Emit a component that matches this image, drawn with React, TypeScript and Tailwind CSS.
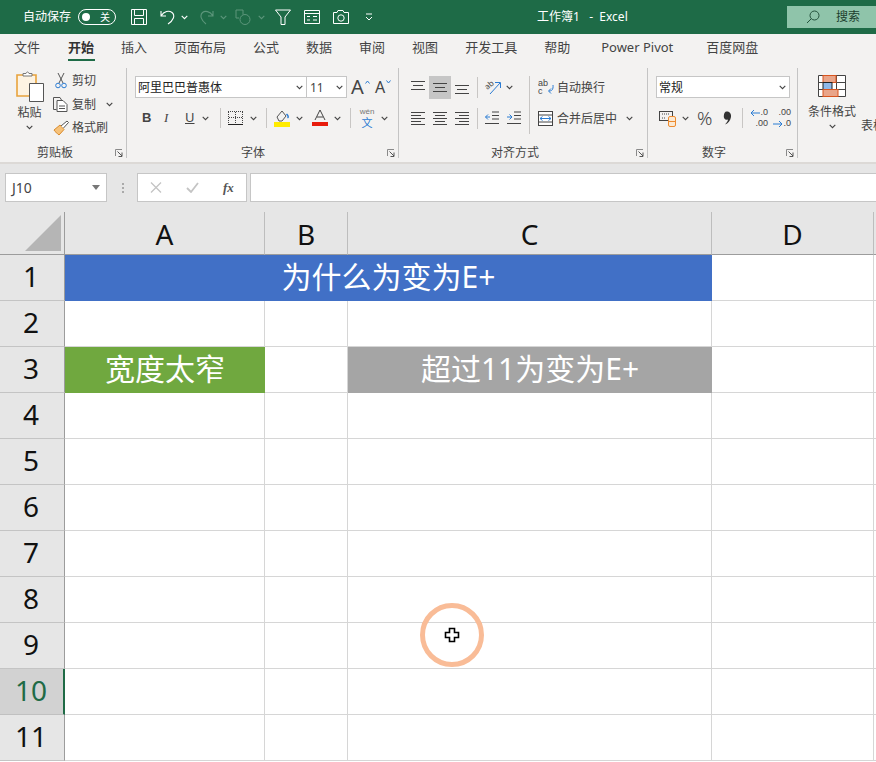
import React from "react";

const Chev = ({ c = "#444", className = "" }: { c?: string; className?: string }) => (
  <svg width="7" height="5" viewBox="0 0 7 5" className={"shrink-0 " + className}>
    <path d="M0.7 0.8 L3.5 3.6 L6.3 0.8" fill="none" stroke={c} strokeWidth="1.1" />
  </svg>
);

const Launcher = () => (
  <svg width="8" height="8" viewBox="0 0 8 8" className="shrink-0">
    <path d="M0.5 7V0.5H7" fill="none" stroke="#8a8a8a" />
    <path d="M2.5 2.5L7 7M7 3.5V7.5H3.5" fill="none" stroke="#555" />
  </svg>
);

const Lines = ({ rows }: { rows: [number, number, number][] }) => (
  <svg width="14" height="14" viewBox="0 0 14 14" className="shrink-0">
    {rows.map((r, i) => (
      <path key={i} d={`M${r[0]} ${r[2]}.5H${r[1]}`} stroke="#444" />
    ))}
  </svg>
);

const VSep = ({ className = "" }: { className?: string }) => <div className={"w-px bg-[#c8c6c4] shrink-0 " + className} />;
const GroupSep = () => <div className="w-px h-[90px] mt-[6px] bg-[#c4c4c4] shrink-0" />;

const cols = ["A", "B", "C", "D"];
const rowNos = [1, 2, 3, 4, 5, 6, 7, 8, 9, 10, 11];

const RowHead = ({ n }: { n: number }) => (
  <div
    className={
      n === 10
        ? "flex items-center justify-center bg-[#d2d2d2] text-[#1f6b46] border-b border-b-[#c0c0c0] border-r-2 border-r-[#1f6b46] pr-[1px] pb-[3px]"
        : "flex items-center justify-center bg-[#e6e6e6] text-[#111] border-b border-b-[#c4c4c4] border-r border-r-[#9c9c9c] pr-[2px] pb-[3px]"
    }
  >
    {n}
  </div>
);

const Cell = ({ last = false }: { last?: boolean }) => (
  <div className={last ? "border-b border-[#d6d6d6]" : "border-b border-r border-[#d6d6d6]"} />
);

export default function App() {
  return (
    <div className="relative w-[876px] h-[762px] overflow-hidden bg-white font-['Noto_Sans','Noto_Sans_CJK_SC',sans-serif] text-[12px] text-[#444]">
      {/* title bar */}
      <div className="flex items-center h-[34px] pl-[23px] bg-[#1e6b47] text-white">
        <span className="w-[48px] text-[12px] whitespace-nowrap">自动保存</span>
        <div className="flex items-center justify-between ml-[7px] w-[38px] h-[16px] rounded-full border border-white px-[3px]">
          <div className="w-[8px] h-[8px] rounded-full bg-white" />
          <span className="text-[10px] leading-none mr-[2px]">关</span>
        </div>
        <svg width="16" height="16" viewBox="0 0 16 16" className="ml-[15px]">
          <path d="M0.5 0.5H15.5V15.5H0.5ZM3.5 0.5V6.5H12.5V0.5M3.5 15.5V9.5H12.5V15.5" fill="none" stroke="#fff" />
        </svg>
        <svg width="16" height="16" viewBox="0 0 16 16" className="ml-[13px]">
          <path d="M1 2V7H6M1.2 6.8C4 2 9 1.2 12 3.5C15.5 6.5 13.5 11.5 8 15" fill="none" stroke="#fff" strokeWidth="1.1" />
        </svg>
        <Chev c="#fff" className="ml-[5px]" />
        <svg width="14" height="16" viewBox="0 0 14 16" className="ml-[12px]">
          <path d="M13 2V7H8M12.8 6.8C10 2 5 1.5 2.5 3.5C-0.5 6.5 1 11 6 15" fill="none" stroke="#5c967b" strokeWidth="1.1" />
        </svg>
        <Chev c="#5c967b" className="ml-[6px]" />
        <svg width="16" height="16" viewBox="0 0 16 16" className="ml-[8px]">
          <path d="M8 5.5V1H1V9H4" fill="none" stroke="#5c967b" />
          <circle cx="10" cy="10.5" r="5" fill="none" stroke="#5c967b" />
        </svg>
        <Chev c="#5c967b" className="ml-[7px]" />
        <svg width="16" height="16" viewBox="0 0 16 16" className="ml-[10px]">
          <path d="M0.5 1H15.5L10 8V15.5H6V8Z" fill="none" stroke="#fff" />
        </svg>
        <svg width="16" height="14" viewBox="0 0 16 14" className="ml-[13px]">
          <path d="M0.5 0.5H15.5V13.5H0.5ZM0.5 3.5H15.5M3 6.5H6M9 6.5H13M3 10H6M9 10H13" fill="none" stroke="#fff" />
        </svg>
        <svg width="16" height="14" viewBox="0 0 16 14" className="ml-[13px]">
          <path d="M0.5 2.5H4L5 0.5H10L11 2.5H15.5V13.5H0.5Z" fill="none" stroke="#fff" />
          <circle cx="8" cy="8" r="3.2" fill="none" stroke="#fff" />
        </svg>
        <svg width="8" height="8" viewBox="0 0 8 8" className="ml-[16px]">
          <path d="M1 1H7M1 4L4 7L7 4" fill="none" stroke="#fff" />
        </svg>
        <span className="ml-[164px] w-[100px] text-[12px] whitespace-pre">工作簿1   -  Excel</span>
        <div className="flex items-center ml-auto w-[89px] h-[22px] bg-[#8fc4aa] text-[#1d3f2e] mb-[1px]">
          <svg width="14" height="14" viewBox="0 0 14 14" className="ml-[19px]">
            <circle cx="8.5" cy="5.5" r="4.5" fill="none" stroke="#24523c" />
            <path d="M5.3 8.7L1 13" stroke="#24523c" />
          </svg>
          <span className="ml-[16px] text-[12px]">搜索</span>
        </div>
      </div>

      {/* tabs */}
      <div className="flex items-center h-[28px] pl-[14px] bg-[#f3f2f1] text-[13px] text-[#444] whitespace-nowrap">
        <span>文件</span>
        <span className="relative ml-[28px] font-bold text-[#333]">
          开始
          <span className="absolute left-0 top-[21px] w-[27px] h-[2px] bg-[#1e6b47]" />
        </span>
        <span className="ml-[27px]">插入</span>
        <span className="ml-[27px]">页面布局</span>
        <span className="ml-[27px]">公式</span>
        <span className="ml-[27px]">数据</span>
        <span className="ml-[27px]">审阅</span>
        <span className="ml-[27px]">视图</span>
        <span className="ml-[27px]">开发工具</span>
        <span className="ml-[27px]">帮助</span>
        <span className="ml-[31px] w-[73px]">Power Pivot</span>
        <span className="ml-[32px]">百度网盘</span>
      </div>

      {/* ribbon */}
      <div className="flex h-[100px] bg-[#f3f2f1] whitespace-nowrap">
        {/* clipboard */}
        <div className="flex flex-col w-[126px] shrink-0">
          <div className="flex h-[82px]">
            <div className="flex flex-col items-center w-[55px] pl-[4px] pt-[9px]">
              <svg width="28" height="31" viewBox="0 0 28 31">
                <path d="M1 4H20V25H1Z" fill="#fdf3e2" stroke="#e8a33d" strokeWidth="1.6" />
                <path d="M7 5V2.5H10C10.5 0.5 12.5 0.5 13 2.5H16V5Z" fill="#fff" stroke="#777" />
                <path d="M13.5 12.5H27.5V30.5H13.5Z" fill="#fff" stroke="#555" />
              </svg>
              <span className="mt-[3px] text-[12px] leading-[16px] text-[#444]">粘贴</span>
              <Chev className="mt-[4px]" />
            </div>
            <div className="flex flex-col pt-[7px] w-[71px]">
              <div className="flex items-center h-[24px]">
                <svg width="12" height="16" viewBox="0 0 12 16">
                  <path d="M3 0L8 10M9 0L4 10" stroke="#555" fill="none" />
                  <circle cx="3" cy="12.5" r="2.3" fill="none" stroke="#2b7cd3" />
                  <circle cx="9" cy="12.5" r="2.3" fill="none" stroke="#2b7cd3" />
                </svg>
                <span className="ml-[5px]">剪切</span>
              </div>
              <div className="flex items-center h-[23px]">
                <svg width="15" height="15" viewBox="0 0 15 15" className="-ml-[2px]">
                  <path d="M3.5 12.5H0.5V0.5H7L8.5 3" fill="none" stroke="#555" />
                  <path d="M4 3.5H10L14 7.5V14.5H4ZM6 9H12M6 11.5H12" fill="#fff" stroke="#555" />
                </svg>
                <span className="ml-[4px]">复制</span>
                <Chev className="ml-[10px]" />
              </div>
              <div className="flex items-center h-[23px]">
                <svg width="16" height="16" viewBox="0 0 16 16" className="-ml-[2px]">
                  <path d="M1 10L7 5L11 9.5L6 15C4 13 2 12 1 10Z" fill="#f6c27a" stroke="#d98a2b" />
                  <path d="M8 6L14 1L15.5 2.5L10.5 8" fill="#fff" stroke="#555" />
                </svg>
                <span className="ml-[3px]">格式刷</span>
              </div>
            </div>
          </div>
          <div className="flex items-center h-[16px] pt-[1px] pl-[37px] pr-[3px]">
            <span>剪贴板</span>
            <span className="ml-auto"><Launcher /></span>
          </div>
        </div>
        <GroupSep />

        {/* font */}
        <div className="flex flex-col w-[271px] shrink-0">
          <div className="flex flex-col h-[82px] pt-[14px] pl-[8px]">
            <div className="flex items-center h-[22px]">
              <div className="flex items-center justify-between w-[172px] h-[22px] bg-white border border-[#c6c6c6] pl-[2px] pr-[3px] text-[12px] text-[#222]">
                <span className="pt-[1px]">阿里巴巴普惠体</span>
                <Chev />
              </div>
              <div className="flex items-center justify-between w-[40px] h-[22px] bg-white border border-[#c6c6c6] border-l-0 pl-[3px] pr-[3px] text-[12px]">
                <span className="pt-[1px]">11</span>
                <Chev />
              </div>
              <span className="ml-[4px] w-[14px] text-[20px] leading-none text-[#444]">A</span>
              <svg width="5" height="4" viewBox="0 0 5 4" className="mb-[10px]"><path d="M0.5 3.5L2.5 1L4.5 3.5" fill="none" stroke="#2b7cd3" /></svg>
              <span className="ml-[5px] w-[11px] text-[16px] leading-none text-[#444]">A</span>
              <svg width="5" height="4" viewBox="0 0 5 4" className="mb-[10px]"><path d="M0.5 0.5L2.5 3L4.5 0.5" fill="none" stroke="#2b7cd3" /></svg>
            </div>
            <div className="flex items-center h-[22px] mt-[9px] pl-[7px]">
              <span className="w-[8px] font-bold text-[13px] font-['Liberation_Sans',sans-serif]">B</span>
              <span className="ml-[14px] w-[8px] italic text-[13px] font-['Liberation_Serif',serif]">I</span>
              <span className="ml-[13px] w-[10px] underline text-[13px]">U</span>
              <Chev className="ml-[7px]" />
              <VSep className="h-[20px] ml-[11px]" />
              <svg width="15" height="14" viewBox="0 0 15 14" className="ml-[7px]">
                <path d="M0 0.5H15M0.5 1V13M14.5 1V13M7.5 1V13M1 6.5H14" fill="none" stroke="#444" strokeDasharray="1 1" />
                <path d="M0 13.5H15" stroke="#222" />
              </svg>
              <Chev className="ml-[7px]" />
              <VSep className="h-[20px] ml-[9px]" />
              <svg width="16" height="18" viewBox="0 0 16 18" className="ml-[7px]">
                <path d="M3 8L8 2L12 7L8 12H5Z" fill="none" stroke="#555" />
                <path d="M12.5 5C14 6.5 15 8 13.5 9" fill="none" stroke="#2b7cd3" strokeWidth="1.5" />
                <rect x="0" y="13" width="16" height="5" fill="#ffeb00" />
              </svg>
              <Chev className="ml-[6px]" />
              <svg width="16" height="18" viewBox="0 0 16 18" className="ml-[9px]">
                <path d="M3 11L8 1L13 11M5 8H11" fill="none" stroke="#444" />
                <rect x="0" y="13" width="16" height="4" fill="#e81c0c" />
              </svg>
              <Chev className="ml-[6px]" />
              <VSep className="h-[20px] ml-[9px]" />
              <div className="flex flex-col items-center w-[16px] ml-[8px]">
                <span className="text-[8px] leading-[8px] text-[#777] font-['Liberation_Sans',sans-serif]">wén</span>
                <span className="text-[11px] leading-[11px] text-[#2b7cd3] mt-[1px]">文</span>
              </div>
              <Chev className="ml-[6px]" />
            </div>
          </div>
          <div className="flex items-center h-[16px] pt-[1px] pl-[114px] pr-[3px]">
            <span>字体</span>
            <span className="ml-auto"><Launcher /></span>
          </div>
        </div>
        <GroupSep />

        {/* alignment */}
        <div className="flex flex-col w-[248px] shrink-0">
          <div className="flex h-[82px] pt-[13px] pl-[12px]">
            <div className="flex flex-col w-[118px]">
              <div className="flex items-center h-[24px]">
                <Lines rows={[[0, 14, 1], [2, 12, 5], [0, 14, 9]]} />
                <div className="flex items-center justify-center w-[22px] h-[23px] ml-[4px] bg-[#c6c6c6]">
                  <Lines rows={[[0, 14, 3], [2, 12, 7], [0, 14, 11]]} />
                </div>
                <span className="ml-[4px]">
                  <Lines rows={[[0, 14, 5], [2, 12, 9], [0, 14, 13]]} />
                </span>
                <VSep className="h-[21px] ml-[8px]" />
                <svg width="16" height="16" viewBox="0 0 16 16" className="ml-[7px] overflow-visible">
                  <text x="0" y="9" fontSize="8" fill="#444" transform="rotate(-40 4 7)">ab</text>
                  <path d="M5 15L15 4M10 3.5H15.5V9" fill="none" stroke="#2b7cd3" />
                </svg>
                <Chev className="ml-[5px]" />
              </div>
              <div className="flex items-center h-[22px] mt-[8px]">
                <Lines rows={[[0, 14, 1], [0, 10, 4], [0, 14, 7], [0, 10, 10], [0, 14, 13]]} />
                <span className="ml-[8px]"><Lines rows={[[0, 14, 1], [2, 12, 4], [0, 14, 7], [2, 12, 10], [0, 14, 13]]} /></span>
                <span className="ml-[8px]"><Lines rows={[[0, 14, 1], [4, 14, 4], [0, 14, 7], [4, 14, 10], [0, 14, 13]]} /></span>
                <VSep className="h-[21px] ml-[8px]" />
                <svg width="14" height="14" viewBox="0 0 14 14" className="ml-[7px]">
                  <path d="M7 1H14M7 4.5H14M7 8H14M0 12.5H14" stroke="#444" />
                  <path d="M5 6H0.5M3 3.5L0.5 6L3 8.5" fill="none" stroke="#2b7cd3" />
                </svg>
                <svg width="14" height="14" viewBox="0 0 14 14" className="ml-[8px]">
                  <path d="M7 1H14M7 4.5H14M7 8H14M0 12.5H14" stroke="#444" />
                  <path d="M0 6H4.5M2.5 3.5L5 6L2.5 8.5" fill="none" stroke="#2b7cd3" />
                </svg>
              </div>
            </div>
            <VSep className="h-[58px] mt-[1px]" />
            <div className="flex flex-col pl-[8px]">
              <div className="flex items-center h-[24px]">
                <span className="w-[10px] whitespace-normal text-[9px] leading-[8px] text-[#444] font-['Liberation_Sans',sans-serif]">ab c</span>
                <svg width="6" height="14" viewBox="0 0 6 14">
                  <path d="M5 5C5.5 10 3.5 11 1 11M3 8.5L0.5 11L3 13.5" fill="none" stroke="#2b7cd3" />
                </svg>
                <span className="ml-[3px] pt-[1px]">自动换行</span>
              </div>
              <div className="flex items-center h-[22px] mt-[8px]">
                <svg width="15" height="15" viewBox="0 0 15 15">
                  <rect x="0.5" y="0.5" width="14" height="14" fill="#fff" stroke="#444" />
                  <path d="M0.5 4H14.5M0.5 11H14.5" stroke="#444" />
                  <path d="M2 7.5H13M4.5 5.5L2 7.5L4.5 9.5M10.5 5.5L13 7.5L10.5 9.5" fill="none" stroke="#2b7cd3" />
                </svg>
                <span className="ml-[4px] pt-[1px]">合并后居中</span>
                <Chev className="ml-[9px]" />
              </div>
            </div>
          </div>
          <div className="flex items-center h-[16px] pt-[1px] pl-[92px] pr-[3px]">
            <span>对齐方式</span>
            <span className="ml-auto"><Launcher /></span>
          </div>
        </div>
        <GroupSep />

        {/* number */}
        <div className="flex flex-col w-[149px] shrink-0">
          <div className="flex flex-col h-[82px] pt-[14px] pl-[8px]">
            <div className="flex items-center justify-between w-[134px] h-[22px] bg-white border border-[#c6c6c6] pl-[2px] pr-[3px] text-[#222]">
              <span className="pt-[1px]">常规</span>
              <Chev />
            </div>
            <div className="flex items-center h-[22px] mt-[9px] pl-[3px]">
              <svg width="18" height="17" viewBox="0 0 18 17">
                <rect x="0.5" y="1.5" width="13" height="9" fill="none" stroke="#444" />
                <path d="M3 4H11M3 8H7" stroke="#444" strokeDasharray="1 1" />
                <rect x="9.5" y="6.5" width="7" height="10" rx="1.5" fill="#fbe9d3" stroke="#ed8b2f" />
                <path d="M9.5 11.5H16.5" stroke="#ed8b2f" />
              </svg>
              <Chev className="ml-[5px]" />
              <span className="ml-[8px] w-[17px] text-[19px] font-light leading-none text-[#444]">%</span>
              <svg width="9" height="14" viewBox="0 0 9 14" className="ml-[9px]">
                <path d="M3.5 0.5C6.5 0.5 8.5 2.5 8 6C7.5 9.5 5 12.5 2 13.5C4 11.5 4.8 10 5 8.5C2 9.5 0.5 7 0.8 5C1 2 2 0.5 3.5 0.5Z" fill="#333" />
              </svg>
              <VSep className="h-[20px] ml-[10px]" />
              <div className="flex flex-col items-end w-[18px] ml-[7px] text-[9px] leading-[11px] text-[#444] font-['Liberation_Sans',sans-serif]">
                <div className="flex items-center">
                  <svg width="10" height="8" viewBox="0 0 10 8"><path d="M10 4H1M4 1L1 4L4 7" fill="none" stroke="#2b7cd3" /></svg>
                  <span>.0</span>
                </div>
                <span>.00</span>
              </div>
              <div className="flex flex-col items-end w-[19px] ml-[4px] text-[9px] leading-[11px] text-[#444] font-['Liberation_Sans',sans-serif]">
                <span>.00</span>
                <div className="flex items-center">
                  <svg width="10" height="8" viewBox="0 0 10 8"><path d="M0 4H9M6 1L9 4L6 7" fill="none" stroke="#2b7cd3" /></svg>
                  <span>.0</span>
                </div>
              </div>
            </div>
          </div>
          <div className="flex items-center h-[16px] pt-[1px] pl-[54px] pr-[3px]">
            <span>数字</span>
            <span className="ml-auto"><Launcher /></span>
          </div>
        </div>
        <GroupSep />

        {/* styles */}
        <div className="flex shrink-0 pl-[10px] pt-[13px]">
          <div className="flex flex-col items-center w-[48px]">
            <svg width="28" height="22" viewBox="0 0 28 22">
              <path d="M0.5 0.5H27.5V21.5H0.5ZM0.5 7.5H27.5M0.5 14.5H27.5M9.5 0.5V21.5M18.5 0.5V21.5" fill="#fff" stroke="#444" />
              <rect x="5" y="0.5" width="13" height="7" fill="#e9a58a" stroke="#d9541e" />
              <rect x="5" y="7.5" width="9" height="7" fill="#8fb8e8" stroke="#222" />
              <rect x="5" y="14.5" width="15" height="7" fill="#e9a58a" stroke="#d9541e" />
            </svg>
            <span className="mt-[7px] leading-[16px]">条件格式</span>
            <Chev className="mt-[4px]" />
          </div>
          <div className="ml-[5px] mt-[43px] leading-[16px]">表格</div>
        </div>
      </div>

      {/* formula bar */}
      <div className="flex h-[50px] pt-[9px] pl-[5px] bg-[#e6e6e6] border-t-2 border-[#dcd9d6]">
        <div className="flex items-center justify-between w-[102px] h-[29px] bg-white border border-[#c6c6c6] pl-[6px] pr-[6px] text-[14px] text-[#444]">
          <span>J10</span>
          <svg width="8" height="5" viewBox="0 0 8 5"><path d="M0 0H8L4 5Z" fill="#777" /></svg>
        </div>
        <div className="flex flex-col justify-center gap-[2px] w-[2px] h-[29px] ml-[15px]">
          <div className="w-[2px] h-[2px] bg-[#aaa]" />
          <div className="w-[2px] h-[2px] bg-[#aaa]" />
          <div className="w-[2px] h-[2px] bg-[#aaa]" />
        </div>
        <div className="flex items-center w-[110px] h-[29px] ml-[13px] bg-white border border-[#c6c6c6] pl-[12px]">
          <svg width="12" height="11" viewBox="0 0 12 11"><path d="M1 0.5L11 10.5M11 0.5L1 10.5" stroke="#c4c4c4" strokeWidth="1.3" /></svg>
          <svg width="13" height="11" viewBox="0 0 13 11" className="ml-[24px]"><path d="M1 6L5 10L12 1" fill="none" stroke="#c4c4c4" strokeWidth="1.8" /></svg>
          <span className="ml-[24px] text-[13px] italic font-bold text-[#555] font-['Liberation_Serif',serif]">fx</span>
        </div>
        <div className="flex-1 h-[29px] ml-[3px] bg-white border border-[#c6c6c6] border-r-0" />
      </div>

      {/* sheet */}
      <div className="grid grid-cols-[65px_200px_83px_364px_162px_2px] grid-rows-[43px_repeat(11,46px)] text-[28px] leading-none">
        {/* column headers */}
        <div className="flex items-end justify-end pr-[3px] pb-[3px] bg-[#e6e6e6] border-b border-r border-[#9c9c9c]">
          <svg width="36" height="36" viewBox="0 0 36 36"><path d="M36 0V36H0Z" fill="#b5b5b5" /></svg>
        </div>
        {cols.map((c) => (
          <div key={c} className="flex items-center justify-center bg-[#e6e6e6] border-b border-r border-b-[#9c9c9c] border-r-[#bdbdbd] text-[#111] pt-[2px]">
            {c}
          </div>
        ))}
        <div className="bg-[#e6e6e6] border-b border-[#9c9c9c]" />

        {/* row 1 */}
        <RowHead n={1} />
        <div className="col-span-3 flex items-center justify-center bg-[#4170c6] text-white text-[30px] pb-[2px]">为什么为变为E+</div>
        <Cell />
        <Cell last />

        {/* row 2 */}
        <RowHead n={2} />
        <Cell />
        <Cell />
        <Cell />
        <Cell />
        <Cell last />

        {/* row 3 */}
        <RowHead n={3} />
        <div className="flex items-center justify-center bg-[#70a83f] text-white text-[30px] pb-[2px]">宽度太窄</div>
        <Cell />
        <div className="flex items-center justify-center bg-[#a5a5a5] text-white text-[30px] pb-[2px]">超过11为变为E+</div>
        <Cell />
        <Cell last />

        {/* rows 4-11 */}
        {rowNos.slice(3).map((n) => (
          <React.Fragment key={n}>
            <RowHead n={n} />
            <Cell />
            <Cell />
            <Cell />
            <Cell />
            <Cell last />
          </React.Fragment>
        ))}
      </div>

      {/* pointer highlight */}
      <div className="absolute left-[420px] top-[603px] flex items-center justify-center w-[64px] h-[64px] rounded-full border-[5px] border-[#f9bc97]">
        <svg width="16" height="16" viewBox="0 0 16 16">
          <path d="M5.5 1.5H10.5V5.5H14.5V10.5H10.5V14.5H5.5V10.5H1.5V5.5H5.5Z" fill="#fff" stroke="#000" strokeWidth="1.6" />
        </svg>
      </div>
    </div>
  );
}
